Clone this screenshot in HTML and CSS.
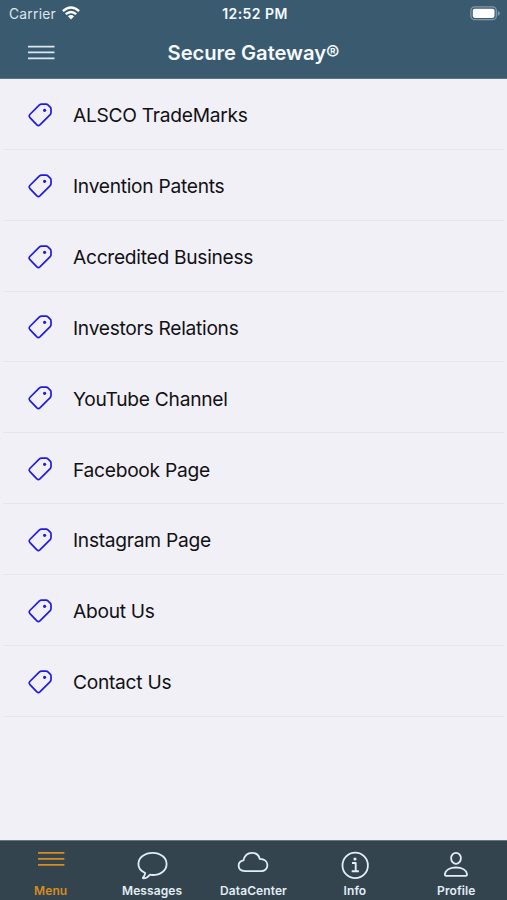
FILE: index.html
```html
<!DOCTYPE html>
<html lang="en">
<head>
<meta charset="utf-8">
<title>Secure Gateway</title>
<link rel="stylesheet" href="styles.css">
</head>
<body>
<svg class="defs" width="0" height="0" aria-hidden="true">
  <symbol id="tag" viewBox="0 0 26 26"><path d="M14.6 2.2 H19.2 Q20.2 2.2 20.9 2.9 L23.2 5.2 Q24 6 24 7 V10.8 Q24 11.8 23.2 12.6 L12.9 22.9 Q11.4 24.3 9.9 22.9 L2.7 15.3 Q1.5 13.9 2.8 12.5 L12.2 3.2 Q13.3 2.2 14.6 2.2Z" fill="none" stroke="currentColor" stroke-width="1.7" stroke-linejoin="round"/><circle cx="17.6" cy="8.3" r="1.6" fill="currentColor"/></symbol>
</svg>
<div class="app">
  <header class="header">
    <div class="status">
      <div class="carrier"><span>Carrier</span>
        <svg width="18" height="14" viewBox="0 0 18 14" fill="none" stroke="#fff" stroke-width="2.4"><path d="M.9 5.2Q9-2.2 17.1 5.2M3.8 8.2Q9 3.6 14.2 8.2"/><path d="M5.9 10.3Q9 7.8 12.1 10.3L9 13.6Z" fill="#fff" stroke="none"/></svg>
      </div>
      <time>12:52 PM</time>
      <svg class="battery" width="31" height="15" viewBox="0 0 31 15"><rect x=".9" y=".9" width="25.4" height="12.8" rx="3.8" fill="none" stroke="#8299a8" stroke-width="1.3"/><rect x="2.8" y="2.7" width="21.7" height="9.2" rx="1.8" fill="#fff"/><path d="M27.8 5v4.8q2-.8 2-2.4t-2-2.4z" fill="#8299a8"/></svg>
    </div>
    <div class="titlebar">
      <svg class="burger" width="27" height="15" viewBox="0 0 27 15"><path d="M0 1.6h26.5M0 7.4h26.5M0 13.3h26.5" stroke="#dce8f0" stroke-width="1.7"/></svg>
      <h1>Secure Gateway®</h1>
    </div>
  </header>
  <main>
    <ul class="list">
      <li><svg class="tag"><use href="#tag"/></svg><span>ALSCO TradeMarks</span></li>
      <li><svg class="tag"><use href="#tag"/></svg><span>Invention Patents</span></li>
      <li><svg class="tag"><use href="#tag"/></svg><span>Accredited Business</span></li>
      <li><svg class="tag"><use href="#tag"/></svg><span>Investors Relations</span></li>
      <li><svg class="tag"><use href="#tag"/></svg><span>YouTube Channel</span></li>
      <li><svg class="tag"><use href="#tag"/></svg><span>Facebook Page</span></li>
      <li><svg class="tag"><use href="#tag"/></svg><span>Instagram Page</span></li>
      <li><svg class="tag"><use href="#tag"/></svg><span>About Us</span></li>
      <li><svg class="tag"><use href="#tag"/></svg><span>Contact Us</span></li>
    </ul>
  </main>
  <nav class="tabs">
    <a class="active"><svg viewBox="0 0 34 34"><path d="M4 2.8h26.4M4 8.8h26.4M4 14.8h26.4" stroke-width="1.8"/></svg><span>Menu</span></a>
    <a><svg viewBox="0 0 34 34"><path d="M10.2 23C6 21.1 3.4 18 3.4 14C3.4 7.5 9.8 2.8 17.6 2.8S31.6 7.5 31.6 14S25.4 25 17.6 25Q16 25 14.9 24.7Q12 28.2 8.6 28.3C7.6 28.3 7.8 27.7 8.3 27.2Q9.9 25.4 10.2 23Z"/></svg><span>Messages</span></a>
    <a><svg viewBox="0 0 34 34"><path d="M9 21.1Q2.6 20.8 2.6 15.8Q2.7 11 7.5 10.4C8.5 5.6 11.6 2.8 16 2.8C20 2.8 22.8 5.1 23.8 8.9C28.3 9 31.4 11.5 31.4 15.1C31.4 18.8 28.7 21.1 25 21.1Z"/></svg><span>DataCenter</span></a>
    <a><svg viewBox="0 0 34 34"><circle cx="17.2" cy="15.4" r="12.7"/><path d="M14 13h3.7v8.2M13.7 21.3h7.2" stroke-width="1.9"/><circle cx="17" cy="9" r="1.6" class="dot"/></svg><span>Info</span></a>
    <a><svg viewBox="0 0 34 34"><ellipse cx="17" cy="8.3" rx="4.9" ry="5.5"/><path d="M7.2 25.8Q5.8 25.8 5.9 24C6.5 20 11 17.5 17 17.5S27.5 20 28 24Q28.2 25.8 26.8 25.8Z"/></svg><span>Profile</span></a>
  </nav>
</div>
</body>
</html>
```

FILE: styles.css
```css
* { box-sizing: border-box; }
body { margin: 0; font-family: Inter, "Liberation Sans", sans-serif; background: #f1f0f6; }
.defs { position: absolute; }
.app { height: 900px; display: grid; grid-template-rows: 79px 1fr 60px; }
.header { background: #3a5a70; color: #f4faff; border-bottom: 1px solid #58758a; }
.status { height: 27px; display: grid; grid-template-columns: 1fr auto 1fr; align-items: center; padding: 0 6px 0 9px; }
.carrier { display: flex; align-items: center; gap: 6px; font-size: 13.8px; letter-spacing: .25px; color: #dce6ed; }
.carrier svg { margin-top: -2px; }
time { font-size: 14px; font-weight: 600; letter-spacing: .45px; }
.battery { justify-self: end; margin-top: -1px; }
.titlebar { height: 51px; display: grid; grid-template-columns: 1fr auto 1fr; align-items: center; padding: 0 28px; }
h1 { margin: 0; font-size: 20.2px; font-weight: 600; line-height: 24px; letter-spacing: -.05px; }
.list { list-style: none; margin: 0; padding: 0 3px; height: 637.5px; display: grid; grid-template-rows: repeat(9, 1fr); color: #111114; }
.list li { display: flex; align-items: center; padding: 2px 0 0 24px; gap: 20px; border-bottom: 1px solid #e5e5ea; font-size: 19.2px; letter-spacing: -.28px; }
.list span { padding-top: 1px; }
.tag { width: 26px; height: 26px; color: #211be0; }
.tabs { background: #33444f; border-top: 1px solid #687680; display: grid; grid-template-columns: repeat(5, 1fr); color: #e3edf4; }
.tabs a { display: flex; flex-direction: column; align-items: center; padding-top: 9px; font-size: 12px; font-weight: 600; line-height: 14px; letter-spacing: .1px; }
.tabs svg { width: 34px; height: 34px; fill: none; stroke: currentColor; stroke-width: 1.8; stroke-linejoin: round; }
.tabs .dot { fill: currentColor; stroke: none; }
.tabs .active { color: #d78c1e; }
```
